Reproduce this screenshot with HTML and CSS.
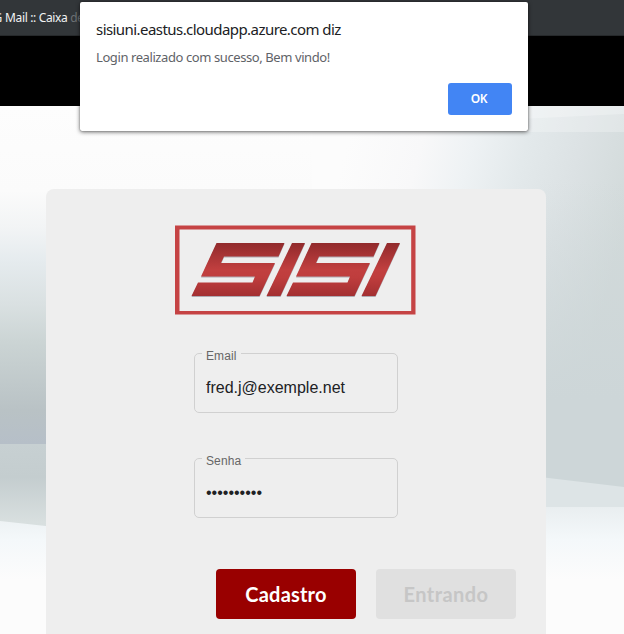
FILE: index.html
```html
<!DOCTYPE html>
<html lang="pt-BR">
<head>
<meta charset="utf-8">
<title>SISI</title>
<link rel="stylesheet" href="styles.css">
</head>
<body>
<div class="bookmarks"><span class="clip">G</span><span>Mail :: Caixa <i class="faded">de</i></span></div>
<header class="topbar"></header>
<main class="stage">
  <svg class="backdrop" viewBox="0 106 624 528" preserveAspectRatio="none" aria-hidden="true">
    <defs>
      <linearGradient id="left" gradientUnits="userSpaceOnUse" x1="0" y1="106" x2="0" y2="444">
        <stop offset="0" stop-color="#fdfdfd"/><stop offset=".25" stop-color="#fbfbfb"/>
        <stop offset=".36" stop-color="#f2f4f5"/><stop offset=".46" stop-color="#e5ebee"/><stop offset=".59" stop-color="#d9e0e1"/>
        <stop offset=".7" stop-color="#cbd4d4"/><stop offset=".9" stop-color="#b9c2c5"/><stop offset="1" stop-color="#b6bfc8"/>
      </linearGradient>
      <linearGradient id="leftFloor" x1="0" y1="0" x2="0" y2="1">
        <stop offset="0" stop-color="#c7d0d2"/><stop offset=".3" stop-color="#c4cdcf"/><stop offset=".7" stop-color="#d8dfdf"/><stop offset="1" stop-color="#dee4e4"/>
      </linearGradient>
      <linearGradient id="right" gradientUnits="userSpaceOnUse" x1="345" y1="150" x2="625" y2="225">
        <stop offset="0" stop-color="#fcfcfc"/><stop offset=".25" stop-color="#f8f8f9"/><stop offset=".42" stop-color="#eef2f4"/><stop offset=".6" stop-color="#e3e9eb"/>
        <stop offset=".78" stop-color="#dce2e4"/><stop offset="1" stop-color="#d2dada"/>
      </linearGradient>
      <linearGradient id="shade" gradientUnits="userSpaceOnUse" x1="0" y1="180" x2="0" y2="400">
        <stop offset="0" stop-color="#cdd6d8" stop-opacity="0"/><stop offset="1" stop-color="#cdd6d8"/>
      </linearGradient>
      <linearGradient id="floor" gradientUnits="userSpaceOnUse" x1="0" y1="507" x2="0" y2="580">
        <stop offset="0" stop-color="#e9eef0"/><stop offset=".45" stop-color="#f4f8fa"/><stop offset="1" stop-color="#fcfcfc"/>
      </linearGradient>
    </defs>
    <rect y="106" width="624" height="528" fill="#fcfcfc"/>
    <rect y="106" width="312" height="338" fill="url(#left)"/>
    <rect y="444" width="312" height="190" fill="url(#floor)"/>
    <path d="M0 444H312V555L0 521Z" fill="url(#leftFloor)"/>
    <rect x="312" y="106" width="312" height="402" fill="url(#right)"/>
    <rect x="540" y="180" width="84" height="328" fill="url(#shade)"/>
    <path d="M520 106H624V132H520Z" fill="#fff" opacity=".25"/>
    <path d="M520 106H624V114L520 119Z" fill="#fff" opacity=".25"/>
    <path d="M540 477L624 487V508H540Z" fill="#dde4e6"/>
    <rect x="540" y="507" width="84" height="127" fill="url(#floor)"/>
  </svg>
  <form class="card">
    <svg class="logo" viewBox="175 225 241 90" role="img" aria-label="SISI">
      <defs><linearGradient id="red" gradientUnits="userSpaceOnUse" x1="0" y1="243" x2="0" y2="296">
        <stop offset="0" stop-color="#912a2c"/><stop offset=".5" stop-color="#c13f3f"/><stop offset=".65" stop-color="#bf3d3d"/><stop offset="1" stop-color="#a32f31"/>
      </linearGradient></defs>
      <path d="M175 225.5H415.500V314.600H175ZM179.500 229.500V311H411.200V229.500Z" fill="#c54344" fill-rule="evenodd"/>
      <g fill="url(#red)" class="letters">
        <path d="M216.500 243H284.500L278.500 256.500H224L221 263H275L259.500 296H191.500L198 282.500H252.500L255 276.500H201Z"/>
        <path d="M292 243H305L280.500 296H266.500Z"/>
        <path d="M311.500 243H379.500L373.500 256.500H319L316 263H370L354.500 296H286.500L293 282.500H347.500L350 276.500H296Z"/>
        <path d="M387 243H400L375.500 296H361.500Z"/>
      </g>
    </svg>
    <fieldset class="field"><legend>Email</legend><div class="value">fred.j@exemple.net</div></fieldset>
    <fieldset class="field"><legend>Senha</legend><div class="value">••••••••••</div></fieldset>
    <div class="actions">
      <button type="button" class="btn primary">Cadastro</button>
      <button type="button" class="btn" disabled>Entrando</button>
    </div>
  </form>
</main>
<section class="dialog" role="dialog">
  <h1>sisiuni.eastus.cloudapp.azure.com diz</h1>
  <p>Login realizado com sucesso, Bem vindo!</p>
  <button type="button" class="ok">OK</button>
</section>
</body>
</html>
```
FILE: styles.css
```css
* { box-sizing: border-box; }
body { margin: 0; height: 634px; overflow: hidden; position: relative; font-family: "Liberation Sans", sans-serif; }
.bookmarks { display: flex; gap: 3px; height: 36px; background: #323639; border-bottom: 1px solid #26292b; color: #f1f3f4; font: 12px/36px "Noto Sans", sans-serif; letter-spacing: -.35px; white-space: nowrap; }
.clip { width: 2px; direction: rtl; overflow: hidden; }
.faded { font-style: normal; color: #6c7073; }
.topbar { height: 70px; background: #000; }
.stage { height: 528px; position: relative; padding: 83px 78px 0 46px; overflow: hidden; }
.backdrop { position: absolute; inset: 0; width: 100%; height: 100%; }
.card { position: relative; width: 500px; height: 500px; padding: 36px 30px 0; border-radius: 8px; background: #eee; display: flex; flex-direction: column; }
.logo { width: 241px; height: 90px; margin-left: 99px; flex: none; }
.letters { filter: drop-shadow(0 1px .5px #77708088); }
.field { width: 204px; height: 67px; margin: 31px 0 0 118px; padding: 0 7px; border: 1px solid #d0d0d0; border-radius: 5px; flex: none; }
.field + .field { margin-top: 38px; }
.field legend { padding: 0 4px; height: 14px; font-size: 12px; line-height: 21px; letter-spacing: .1px; color: #666; }
.value { padding: 18px 0 0 4px; font-size: 16px; line-height: 20px; color: #202124; }
.actions { display: flex; justify-content: flex-end; gap: 20px; margin-top: 51px; }
.btn { width: 140px; height: 50px; border: 0; border-radius: 4px; padding: 0; font: bold 20px Lato, sans-serif; letter-spacing: .45px; background: #e0e0e0; color: #c6c6c6; }
.btn.primary { background: #900; color: #fff; letter-spacing: .2px; }
.dialog { position: absolute; left: 80px; top: 2px; width: 448px; height: 129px; padding: 17px 16px 16px; border-radius: 2px; background: #fff; box-shadow: 0 1px 4px #0009, 0 0 1px #0009; display: flex; flex-direction: column; font-family: "Noto Sans", sans-serif; }
.dialog h1 { margin: 0; font-size: 15px; line-height: 20px; font-weight: 400; letter-spacing: -.56px; color: #202124; white-space: nowrap; }
.dialog p { margin: 9px 0 0; font-size: 13px; line-height: 18px; letter-spacing: -.41px; color: #5f6368; }
.ok { margin: auto 0 0 auto; width: 64px; height: 32px; border: 0; border-radius: 3px; background: #4285f4; color: #fff; font: 600 12px "Noto Sans", sans-serif; letter-spacing: -.3px; padding: 0 2px 2px 0; }
```
